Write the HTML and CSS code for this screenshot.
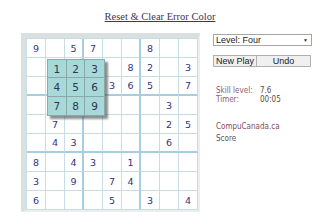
FILE: index.html
```html
<!DOCTYPE html>
<html>
<head>
<meta charset="utf-8">
<link rel="stylesheet" href="styles.css">
</head>
<body>
<div class="top"><a class="reset" href="#">Reset &amp; Clear Error Color</a></div>
<div class="main">
  <div class="frame">
    <div class="board">
      <div class="c">9</div><div class="c"></div><div class="c bx">5</div><div class="c">7</div><div class="c"></div><div class="c bx"></div><div class="c">8</div><div class="c"></div><div class="c"></div>
      <div class="c"></div><div class="c"></div><div class="c bx"></div><div class="c"></div><div class="c"></div><div class="c bx">8</div><div class="c">2</div><div class="c"></div><div class="c">3</div>
      <div class="c by"></div><div class="c by"></div><div class="c bx by"></div><div class="c by"></div><div class="c by">3</div><div class="c bx by">6</div><div class="c by">5</div><div class="c by"></div><div class="c by">7</div>
      <div class="c"></div><div class="c"></div><div class="c bx"></div><div class="c"></div><div class="c"></div><div class="c bx"></div><div class="c"></div><div class="c">3</div><div class="c"></div>
      <div class="c"></div><div class="c">7</div><div class="c bx"></div><div class="c"></div><div class="c"></div><div class="c bx"></div><div class="c"></div><div class="c">2</div><div class="c">5</div>
      <div class="c by"></div><div class="c by">4</div><div class="c bx by">3</div><div class="c by"></div><div class="c by"></div><div class="c bx by"></div><div class="c by"></div><div class="c by">6</div><div class="c by"></div>
      <div class="c">8</div><div class="c"></div><div class="c bx">4</div><div class="c">3</div><div class="c"></div><div class="c bx">1</div><div class="c"></div><div class="c"></div><div class="c"></div>
      <div class="c">3</div><div class="c"></div><div class="c bx">9</div><div class="c"></div><div class="c">7</div><div class="c bx">4</div><div class="c"></div><div class="c"></div><div class="c"></div>
      <div class="c">6</div><div class="c"></div><div class="c bx"></div><div class="c"></div><div class="c">5</div><div class="c bx"></div><div class="c">3</div><div class="c"></div><div class="c">4</div>
    </div>
    <div class="pad">
      <div class="p">1</div><div class="p">2</div><div class="p">3</div>
      <div class="p">4</div><div class="p">5</div><div class="p">6</div>
      <div class="p">7</div><div class="p">8</div><div class="p">9</div>
    </div>
  </div>
  <div class="side">
    <div class="select"><span>Level: Four</span><span class="arrow">&#9660;</span></div>
    <div class="buttons"><div class="btn b1">New Play</div><div class="btn b2">Undo</div></div>
    <div class="stats">
      <span class="lbl">Skill level:</span><span class="val">7.6</span>
      <span class="lbl">Timer:</span><span class="val">00:05</span>
    </div>
    <div class="site">CompuCanada.ca</div>
    <div class="score">Score</div>
  </div>
</div>
</body>
</html>
```
FILE: styles.css
```css
html, body { margin: 0; padding: 0; background: #fff; }
body { width: 320px; height: 224px; overflow: hidden; }
.top { text-align: center; padding-top: 6px; height: 26px; box-sizing: border-box; }
.reset { font-family: "Liberation Serif", serif; font-size: 10.5px; color: #46325e; text-decoration: underline; }
.main { display: flex; align-items: flex-start; padding-left: 21px; padding-top: 7px; }
.frame { position: relative; border-top: 5px solid #dadfdf; border-left: 5px solid #dadfdf; border-right: 2px solid #eceeee; border-bottom: 2px solid #eceeee; }
.board { display: grid; grid-template-columns: repeat(9, 19px); grid-template-rows: repeat(9, 19px); border-left: 1px solid #c6dde6; border-top: 1px solid #c6dde6; background: #fff; }
.c { box-sizing: border-box; border-right: 1px solid #c6dde6; border-bottom: 1px solid #c6dde6; font-family: "DejaVu Sans", sans-serif; font-size: 9.5px; color: #2e3580; display: flex; align-items: center; justify-content: center; }
.c.bx { border-right: 2px solid #a7cde0; }
.c.by { border-bottom: 2px solid #a7cde0; }
.pad { position: absolute; left: 21px; top: 21px; width: 58px; height: 57px; box-sizing: border-box; display: grid; grid-template-columns: repeat(3, 1fr); grid-template-rows: repeat(3, 1fr); background: #a8d9d9; border: 1px solid #8aa8a8; box-shadow: 3px 3px 2px rgba(60,70,70,0.6); }
.p { box-sizing: border-box; border-right: 1px solid #8aa8a8; border-bottom: 1px solid #8aa8a8; font-family: "DejaVu Sans", sans-serif; font-size: 10.5px; color: #2d3550; display: flex; align-items: center; justify-content: center; }
.p:nth-child(3n) { border-right: none; }
.p:nth-child(n+7) { border-bottom: none; }
.side { margin-left: 13px; margin-top: 1px; display: flex; flex-direction: column; }
.select { width: 99px; height: 12px; box-sizing: border-box; border: 1px solid #a6a6a6; display: flex; align-items: center; justify-content: space-between; padding: 0 3px 0 2px; font-family: "Liberation Sans", sans-serif; font-size: 9px; color: #222; }
.arrow { font-size: 5px; color: #333; }
.buttons { display: flex; margin-top: 9px; }
.btn { height: 12px; box-sizing: border-box; border: 1px solid #b0b0b0; background: #f0f0f0; font-family: "Liberation Sans", sans-serif; font-size: 9px; color: #222; display: flex; align-items: center; justify-content: center; }
.b1 { width: 44px; }
.b2 { width: 54px; border-left: none; }
.stats { display: grid; grid-template-columns: 44px auto; margin-top: 19px; margin-left: 3px; font-family: "DejaVu Sans Condensed", "DejaVu Sans", sans-serif; font-stretch: condensed; font-size: 8px; line-height: 9px; }
.lbl { color: #8f5d6c; }
.val { color: #5c4a4a; }
.site { margin-top: 18px; margin-left: 3px; font-family: "DejaVu Sans Condensed", "DejaVu Sans", sans-serif; font-stretch: condensed; font-size: 8px; color: #8a4a5a; }
.score { margin-top: 3px; margin-left: 3px; font-family: "DejaVu Sans Condensed", "DejaVu Sans", sans-serif; font-stretch: condensed; font-size: 8px; color: #555; }
```
